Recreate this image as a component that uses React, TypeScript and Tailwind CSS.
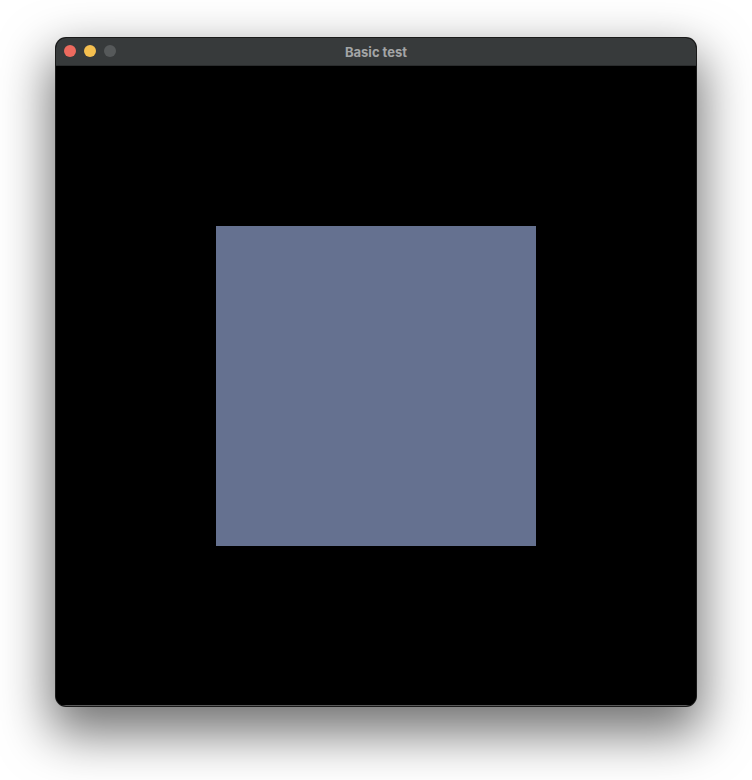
import React from "react";

export default function App() {
  return (
    <div className="w-[752px] h-[780px] bg-white flex justify-center pt-[38px]" style={{ fontFamily: "Inter, 'Liberation Sans', sans-serif" }}>
      <div className="w-[640px] h-[668px] rounded-[10px] overflow-hidden flex flex-col bg-black ring-1 ring-[#1a1a1a] shadow-[0_22px_50px_6px_rgba(0,0,0,0.55)]">
        <div className="h-[28px] bg-[#373a3b] relative flex items-center justify-center border-b border-[#2a2c2d]">
          <div className="absolute left-[8px] top-[7px] flex gap-[8px]">
            <div className="w-[12px] h-[12px] rounded-full bg-[#ed6a5e]" />
            <div className="w-[12px] h-[12px] rounded-full bg-[#f5bf4f]" />
            <div className="w-[12px] h-[12px] rounded-full bg-[#56595a]" />
          </div>
          <span className="text-[13px] font-bold text-[#a3a5a6] pt-[2px]">Basic test</span>
        </div>
        <div className="flex-1 flex items-center justify-center bg-black border-b border-[#5a5a5a]">
          <div className="w-[320px] h-[320px] bg-[#657190]" />
        </div>
      </div>
    </div>
  );
}
